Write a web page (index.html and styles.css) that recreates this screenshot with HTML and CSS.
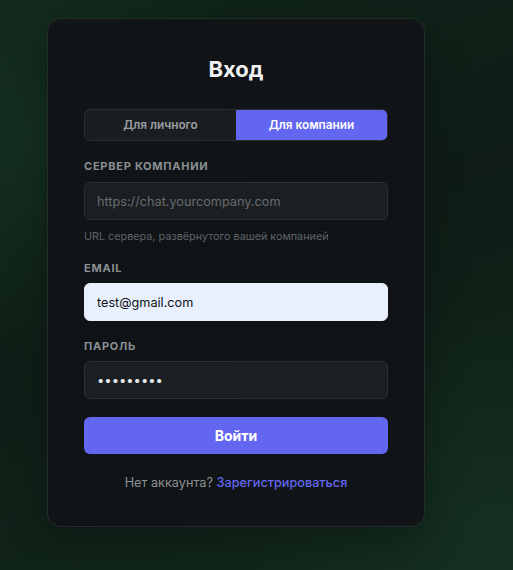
FILE: index.html
```html
<!DOCTYPE html>
<html lang="ru">
<head>
<meta charset="utf-8">
<title>Вход</title>
<link rel="stylesheet" href="styles.css">
</head>
<body>
<div class="page">
  <form class="card" onsubmit="return false">
    <h1 class="title">Вход</h1>
    <div class="tabs">
      <button type="button" class="tab">Для личного</button>
      <button type="button" class="tab tab-active">Для компании</button>
    </div>
    <div class="group group-server">
      <label class="label">Сервер компании</label>
      <input class="input" type="text" placeholder="https://chat.yourcompany.com">
      <div class="hint">URL сервера, развёрнутого вашей компанией</div>
    </div>
    <div class="group group-email">
      <label class="label">Email</label>
      <input class="input input-filled" type="email" value="test@gmail.com">
    </div>
    <div class="group">
      <label class="label">Пароль</label>
      <input class="input" type="password" value="123456789">
    </div>
    <button type="submit" class="submit">Войти</button>
    <p class="footer">Нет аккаунта? <a class="link" href="#">Зарегистрироваться</a></p>
  </form>
</div>
</body>
</html>
```
FILE: styles.css
```css
* { box-sizing: border-box; }
html, body { margin: 0; height: 100%; }
body {
  font-family: Inter, "Noto Sans", "Liberation Sans", sans-serif;
  background:
    radial-gradient(ellipse 70% 60% at 5% 25%, rgba(24, 56, 36, 0.6), transparent 70%),
    radial-gradient(ellipse 70% 60% at 95% 95%, rgba(24, 54, 36, 0.55), transparent 70%),
    linear-gradient(160deg, #10261b 0%, #0e1c15 45%, #12291d 100%);
  overflow: hidden;
}
.page {
  padding: 18px 0 0 47px;
}
.card {
  width: 378px;
  background: linear-gradient(160deg, #111517 0%, #0f1315 60%, #111517 100%);
  border: 1px solid #262b2c;
  border-radius: 14px;
  padding: 36px 36px 33px;
  box-shadow: 0 12px 40px rgba(0, 0, 0, 0.3);
  display: flex;
  flex-direction: column;
}
.title {
  margin: 0 0 26px;
  font-size: 22px;
  line-height: 28px;
  font-weight: 700;
  color: #eef0f1;
  text-align: center;
}
.tabs {
  display: flex;
  height: 32px;
  border: 1px solid #2a2e30;
  border-radius: 6px;
  background: #1b1e20;
  overflow: hidden;
  margin-bottom: 17px;
}
.tab {
  flex: 1;
  border: 0;
  background: transparent;
  font-family: inherit;
  font-size: 11.8px;
  font-weight: 600;
  color: #9a9ea2;
  cursor: pointer;
}
.tab-active {
  background: #6366f1;
  color: #ffffff;
}
.group { display: flex; flex-direction: column; margin-bottom: 17px; }
.group-server { margin-bottom: 15px; }
.label {
  font-size: 11px;
  line-height: 16px;
  font-weight: 700;
  letter-spacing: 0.75px;
  text-transform: uppercase;
  color: #8b9094;
  margin-bottom: 7px;
}
.input {
  height: 38px;
  border: 1px solid #2c3032;
  border-radius: 6px;
  background: #1c1f21;
  padding: 0 12px;
  font-family: inherit;
  font-size: 12.7px;
  color: #e6e8ea;
  outline: none;
}
.group-server .input { margin-top: 1px; height: 38px; }
.input::placeholder { color: #676c70; }
.input[type="password"] { font-size: 13px; letter-spacing: 0; }
.input-filled {
  background: #e8f0fe;
  border-color: #e8f0fe;
  color: #111418;
}
.hint {
  margin-top: 9px;
  font-size: 10.8px;
  line-height: 16px;
  color: #5f6468;
}
.submit {
  margin-top: 1px;
  height: 37px;
  border: 0;
  border-radius: 6px;
  background: #6366f1;
  color: #ffffff;
  font-family: inherit;
  font-size: 14px;
  font-weight: 700;
  cursor: pointer;
}
.footer {
  margin: 19px 0 0;
  font-size: 12.7px;
  line-height: 20px;
  color: #8b9094;
  text-align: center;
}
.link {
  color: #6366f1;
  font-weight: 500;
  text-decoration: none;
}
```
